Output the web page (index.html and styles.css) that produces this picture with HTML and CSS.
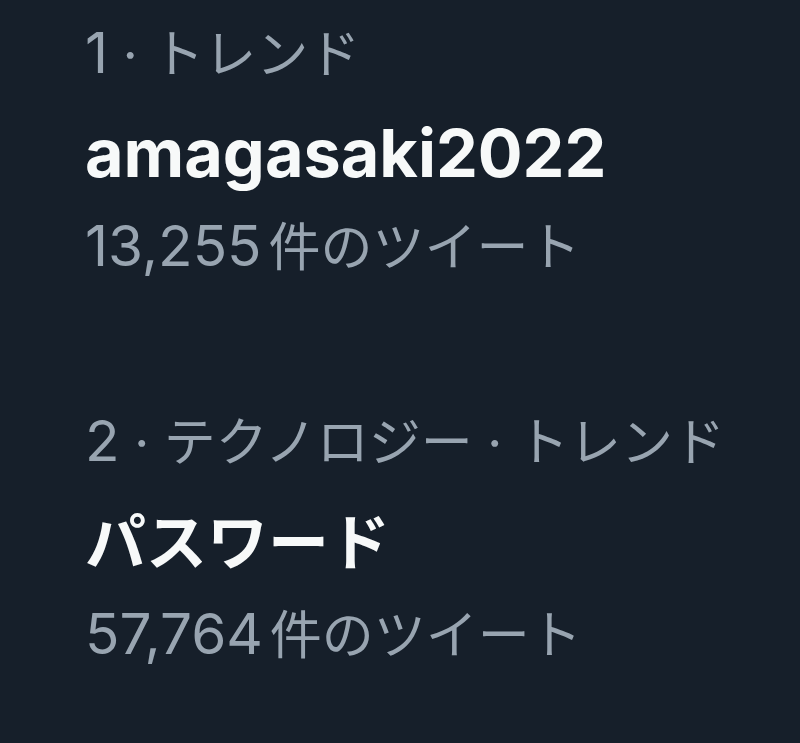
FILE: index.html
```html
<!DOCTYPE html>
<html lang="ja">
<head>
  <meta charset="UTF-8">
  <meta name="viewport" content="width=device-width, initial-scale=1.0">
  <title>トレンド</title>
  <link rel="stylesheet" href="styles.css">
</head>
<body>
  <div class="trends">
    <div class="trend">
      <div class="trend-meta"><span class="latin">1</span> · トレンド</div>
      <div class="trend-name"><span class="latin">amagasaki2022</span></div>
      <div class="trend-count"><span class="latin num">13,255</span>件のツイート</div>
    </div>
    <div class="trend">
      <div class="trend-meta"><span class="latin">2</span> · テクノロジー · トレンド</div>
      <div class="trend-name">パスワード</div>
      <div class="trend-count"><span class="latin num">57,764</span>件のツイート</div>
    </div>
  </div>
</body>
</html>
```

FILE: styles.css
```css
html,body{
  margin : 0;
  height : 100%;
}
body{
  background : #161f2a;
  font-family : "Inter", "Noto Sans CJK JP", sans-serif;
}
.trends{
  display : flex;
  flex-direction : column;
  gap : 105px;
  padding : 10px 0 0 85px;
}
.trend{
  display : flex;
  flex-direction : column;
}
.trend-meta,
.trend-count{
  color : #98a4b0;
  font-size : 52px;
  line-height : 90px;
}
.trend-name{
  color : #f7f9f9;
  font-size : 61px;
  font-weight : 700;
  line-height : 96px;
  margin-top : 7px;
}
/* 英数字は少し大きめ */
.latin{
  font-size : 1.09em;
  line-height : 1;
}
.num{
  margin-right : 0.12em;
}
```
